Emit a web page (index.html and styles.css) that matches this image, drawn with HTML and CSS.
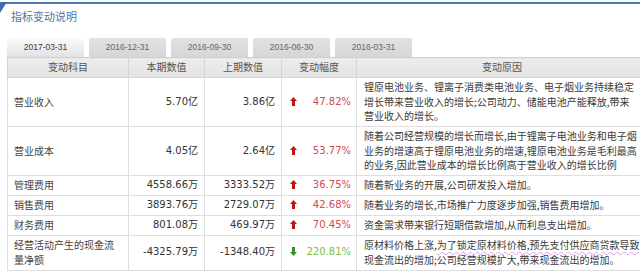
FILE: index.html
```html
<!DOCTYPE html>
<html lang="zh">
<head>
<meta charset="utf-8">
<link rel="stylesheet" href="styles.css">
</head>
<body>
<div class="panel">
  <div class="topbar"></div>
  <h2 class="title">指标变动说明</h2>
  <div class="tabs">
    <div class="tab active">2017-03-31</div>
    <div class="tab">2016-12-31</div>
    <div class="tab">2016-09-30</div>
    <div class="tab">2016-06-30</div>
    <div class="tab">2016-03-31</div>
  </div>
  <table class="grid">
    <colgroup>
      <col class="c1"><col class="c2"><col class="c3"><col class="c4"><col class="c5">
    </colgroup>
    <thead>
      <tr><th>变动科目</th><th>本期数值</th><th>上期数值</th><th>变动幅度</th><th>变动原因</th></tr>
    </thead>
    <tbody>
      <tr>
        <td class="name">营业收入</td><td class="num">5.70亿</td><td class="num">3.86亿</td>
        <td class="pct"><span class="val red">47.82%</span><span class="arr up"><svg viewBox="0 0 7 9" width="7" height="9"><path d="M3.5 0 L7 4 L5 4 L5 9 L2 9 L2 4 L0 4 Z"/></svg></span></td>
        <td class="why">锂原电池业务、锂离子消费类电池业务、电子烟业务持续稳定<br>增长带来营业收入的增长;公司动力、储能电池产能释放,带来<br>营业收入的增长。</td>
      </tr>
      <tr>
        <td class="name">营业成本</td><td class="num">4.05亿</td><td class="num">2.64亿</td>
        <td class="pct"><span class="val red">53.77%</span><span class="arr up"><svg viewBox="0 0 7 9" width="7" height="9"><path d="M3.5 0 L7 4 L5 4 L5 9 L2 9 L2 4 L0 4 Z"/></svg></span></td>
        <td class="why">随着公司经营规模的增长而增长,由于锂离子电池业务和电子烟<br>业务的增速高于锂原电池业务的增速,锂原电池业务是毛利最高<br>的业务,因此营业成本的增长比例高于营业收入的增长比例</td>
      </tr>
      <tr>
        <td class="name">管理费用</td><td class="num">4558.66万</td><td class="num">3333.52万</td>
        <td class="pct"><span class="val red">36.75%</span><span class="arr up"><svg viewBox="0 0 7 9" width="7" height="9"><path d="M3.5 0 L7 4 L5 4 L5 9 L2 9 L2 4 L0 4 Z"/></svg></span></td>
        <td class="why">随着新业务的开展,公司研发投入增加。</td>
      </tr>
      <tr>
        <td class="name">销售费用</td><td class="num">3893.76万</td><td class="num">2729.07万</td>
        <td class="pct"><span class="val red">42.68%</span><span class="arr up"><svg viewBox="0 0 7 9" width="7" height="9"><path d="M3.5 0 L7 4 L5 4 L5 9 L2 9 L2 4 L0 4 Z"/></svg></span></td>
        <td class="why">随着业务的增长,市场推广力度逐步加强,销售费用增加。</td>
      </tr>
      <tr>
        <td class="name">财务费用</td><td class="num">801.08万</td><td class="num">469.97万</td>
        <td class="pct"><span class="val red">70.45%</span><span class="arr up"><svg viewBox="0 0 7 9" width="7" height="9"><path d="M3.5 0 L7 4 L5 4 L5 9 L2 9 L2 4 L0 4 Z"/></svg></span></td>
        <td class="why">资金需求带来银行短期借款增加,从而利息支出增加。</td>
      </tr>
      <tr>
        <td class="name">经营活动产生的现金流<br>量净额</td><td class="num">-4325.79万</td><td class="num">-1348.40万</td>
        <td class="pct"><span class="val green">220.81%</span><span class="arr down"><svg viewBox="0 0 7 9" width="7" height="9"><path d="M3.5 9 L7 5 L5 5 L5 0 L2 0 L2 5 L0 5 Z"/></svg></span></td>
        <td class="why">原材料价格上涨,<span class="mark">为了锁定原材料价格,预先支付供应商贷款导致</span><br>现金流出的增加;公司经营规模扩大,带来现金流出的增加。</td>
      </tr>
    </tbody>
  </table>
</div>
</body>
</html>
```

FILE: styles.css
```css
html, body {
  margin: 0;
  padding: 0;
  background: #ffffff;
  overflow: hidden;
}

body {
  font-family: "DejaVu Sans", "Noto Sans CJK SC", sans-serif;
  color: #3a3a3a;
}

.panel {
  padding-top: 2px;
  width: 660px;
}

.topbar {
  position: relative;
  height: 2px;
  background: #4a7ab6;
  width: 640px;
}

.topbar::before {
  content: "";
  position: absolute;
  left: 0;
  top: 0;
  border-top: 11px solid #3d6fb1;
  border-right: 7px solid transparent;
}

.title {
  margin: 5px 0 0 11px;
  font: normal 11px/15px "Noto Sans CJK SC", sans-serif;
  color: #5074aa;
}

.tabs {
  display: flex;
  gap: 5px;
  margin: 14px 0 0 7px;
}

.tab {
  width: 77px;
  height: 19px;
  line-height: 19px;
  text-align: center;
  font-family: "Liberation Sans", sans-serif;
  font-size: 8.5px;
  color: #666666;
  background: linear-gradient(#e2e2e2, #d6d6d6);
  border-radius: 2px 2px 0 0;
}

.tab.active {
  background: linear-gradient(#fbfbfb, #e2e2e2);
  color: #3c3c3c;
}

.grid {
  margin-left: 7px;
  border-collapse: collapse;
  table-layout: fixed;
  width: 640px;
  font-size: 10px;
  line-height: 14.5px;
}

.c1 { width: 121px; }
.c2 { width: 76px; }
.c3 { width: 77px; }
.c4 { width: 75px; }
.c5 { width: 291px; }

.grid th {
  height: 19px;
  padding: 0;
  font-weight: normal;
  font-family: "Noto Sans CJK SC", sans-serif;
  color: #555555;
  background: linear-gradient(#ededed, #e3e3e3);
  border: 1px solid #d6d6d6;
  border-top-color: #cfcfcf;
  text-align: center;
  vertical-align: middle;
}

.grid td {
  padding: 2px 6px 2.5px;
  height: 14.5px;
  border: 1px solid #dedede;
  vertical-align: middle;
  white-space: nowrap;
}

.grid td.name {
  font-family: "Noto Sans CJK SC", sans-serif;
  color: #444444;
}

.grid td.num {
  text-align: right;
  color: #333333;
}

.grid td.pct {
  padding-left: 8px;
  padding-right: 5px;
}

.arr {
  display: inline-block;
  vertical-align: -1px;
  line-height: 0;
}

.arr svg {
  display: block;
}

.arr.up svg { fill: #c21414; }
.arr.down svg { fill: #2f9230; }

.val {
  float: right;
}

.red { color: #d04a4f; }
.green { color: #7ebf45; }

.grid td.why {
  padding-left: 7px;
  font-family: "Noto Sans CJK SC", sans-serif;
  color: #3a3a3a;
}

.mark {
  text-decoration: underline wavy #d7a2e6;
  text-decoration-thickness: 1px;
  text-underline-offset: 2px;
}
```
